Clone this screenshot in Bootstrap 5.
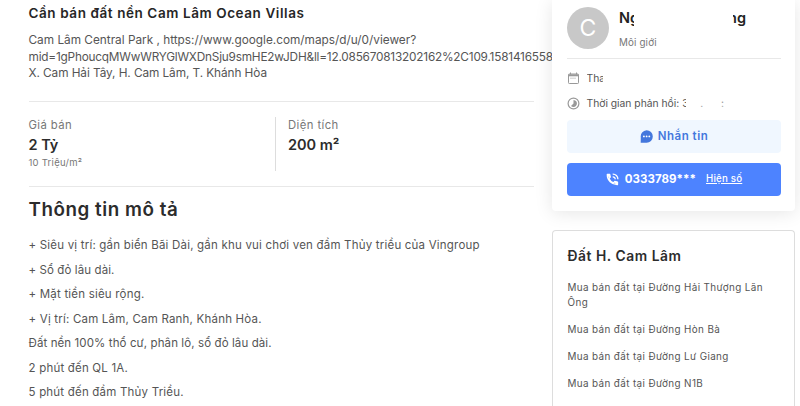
<!DOCTYPE html>
<html lang="vi">
<head>
<meta charset="utf-8">
<meta name="viewport" content="width=device-width, initial-scale=1">
<title>Cần bán đất nền Cam Lâm Ocean Villas</title>
<link href="https://cdn.jsdelivr.net/npm/bootstrap@5.3.0/dist/css/bootstrap.min.css" rel="stylesheet">
<style>
body{font-family:Inter,"Open Sans",sans-serif;color:#555;background:#fff;font-size:11.5px;width:800px;height:406px;overflow:hidden}
.page{height:406px}
.listing{width:505px;margin-left:28.5px;margin-right:18.5px;white-space:nowrap}
.listing-title{font-size:13.5px;line-height:18px;font-weight:600;color:#262626;padding-top:4px;letter-spacing:.58px}
.address{font-size:11.8px;line-height:16.5px;margin-top:10px;height:69px}
.map-id{letter-spacing:-.2px}
.place{letter-spacing:-.07px}
.rule{border-color:#e8e8e8!important}
.facts{height:86px;padding-top:15px}
.fact{width:246px;height:54px}
.fact+.fact{border-left:1px solid #ddd;padding-left:12.5px}
.fact-label{font-size:11.3px;line-height:16px;color:#777;letter-spacing:.42px}
.fact-value{font-size:14.5px;line-height:22px;font-weight:600;color:#2c2c2c;margin-top:1px}
.fact-note{font-size:9.5px;line-height:14px;color:#777;letter-spacing:.25px}
.section-title{font-size:18.8px;line-height:24px;font-weight:600;color:#2c2c2c;margin-top:11px;letter-spacing:.55px}
.description{margin-top:11px}
.description p{font-size:11.5px;line-height:24.5px;letter-spacing:.2px}
.description .tight{letter-spacing:.1px}
.sidebar{width:243px}
.agent{height:211px;padding:7px 14px 0 15px;background:#fff;border-radius:0 0 4px 4px;box-shadow:0 2px 18px rgba(0,0,0,.1)}
.agent-head{height:52px;gap:10px}
.avatar{width:42px;height:42px;background:#c8c8c8;font-size:23px}
.agent-name{font-size:14.5px;line-height:20px;font-weight:600;color:#222;width:127px;margin-top:1px}
.clip{display:inline-block;overflow:hidden;white-space:nowrap}
.clip-ng{width:15px}
.clip-end{width:13px;direction:rtl}
.clip-tha{width:16px}
.clip-num{width:4px}
.role{font-size:9.8px;color:#777;line-height:14px;margin-top:8px;letter-spacing:.15px}
.agent-lines{padding-top:7px}
.agent-line{height:25px;font-size:10.3px;gap:6.5px;color:#555}
.agent-line svg{flex:none}
.trace{color:#999;margin-left:14px}
.trace+.trace{margin-left:18px}
.action{height:33px;border-radius:4px;font-size:11.5px;font-weight:600;border:0;padding:0}
.chat{background:#f0f7ff;color:#4477dd;gap:5px;letter-spacing:.5px}
.call{background:#4d83ff;color:#fff;gap:6px;margin-top:10px}
.phone{font-weight:700;letter-spacing:.05px}
.reveal{font-size:9.7px;font-weight:500;margin-left:4px;letter-spacing:.2px}
.related{margin-top:19px;height:176px;border:1px solid #ddd;border-bottom:0;border-radius:4px 4px 0 0;background:#fff;padding:15px 15px 0 14.5px}
.related h2{font-size:13.8px;line-height:20px;font-weight:600;color:#2c2c2c;margin:0 0 13.5px;letter-spacing:.55px}
.related li{font-size:9.9px;line-height:15px;margin-bottom:12.2px;white-space:nowrap;letter-spacing:.37px}
.related li:last-child{margin-bottom:0}
</style>
<script src="https://cdn.jsdelivr.net/npm/bootstrap@5.3.0/dist/js/bootstrap.bundle.min.js"></script>
</head>
<body>
<div class="page d-flex overflow-hidden">
  <main class="listing flex-shrink-0">
    <h1 class="listing-title mb-0">Cần bán đất nền Cam Lâm Ocean Villas</h1>
    <div class="address">
      <div>Cam Lâm Central Park , https://www.google.com/maps/d/u/0/viewer?</div>
      <div class="map-id">mid=1gPhoucqMWwWRYGlWXDnSju9smHE2wJDH&amp;ll=12.085670813202162%2C109.1581416558</div>
      <div class="place">X. Cam Hải Tây, H. Cam Lâm, T. Khánh Hòa</div>
    </div>
    <section class="facts d-flex border-top border-bottom rule">
      <div class="fact">
        <div class="fact-label">Giá bán</div>
        <div class="fact-value">2 Tỷ</div>
        <div class="fact-note">10 Triệu/m²</div>
      </div>
      <div class="fact">
        <div class="fact-label">Diện tích</div>
        <div class="fact-value">200 m²</div>
      </div>
    </section>
    <h2 class="section-title mb-0">Thông tin mô tả</h2>
    <div class="description">
      <p class="mb-0">+ Siêu vị trí: gần biển Bãi Dài, gần khu vui chơi ven đầm Thủy triều của Vingroup</p>
      <p class="mb-0 tight">+ Sổ đỏ lâu dài.</p>
      <p class="mb-0">+ Mặt tiền siêu rộng.</p>
      <p class="mb-0">+ Vị trí: Cam Lâm, Cam Ranh, Khánh Hòa.</p>
      <p class="mb-0 tight">Đất nền 100% thổ cư, phân lô, sổ đỏ lâu dài.</p>
      <p class="mb-0">2 phút đến QL 1A.</p>
      <p class="mb-0">5 phút đến đầm Thủy Triều.</p>
    </div>
  </main>
  <aside class="sidebar flex-shrink-0 position-relative">
    <section class="agent">
      <div class="agent-head d-flex border-bottom rule">
        <div class="avatar rounded-circle d-flex align-items-center justify-content-center text-white">C</div>
        <div>
          <div class="agent-name d-flex justify-content-between"><span class="clip clip-ng">Ng</span><span class="clip clip-end">ng</span></div>
          <div class="role">Môi giới</div>
        </div>
      </div>
      <div class="agent-lines">
        <div class="agent-line d-flex align-items-center">
          <svg width="13" height="13" viewBox="0 0 13 13" fill="none" stroke="#999"><rect x="1.5" y="2" width="10" height="9.5" rx=".8"/><path d="M1.5 3.3h10" stroke-width="2"/><path d="M3.5.5v2M9.5.5v2"/><path d="M3.5 6.2h6" stroke-dasharray="1 1"/></svg>
          <span class="clip clip-tha">Tha</span>
        </div>
        <div class="agent-line d-flex align-items-center">
          <svg width="13" height="13" viewBox="0 0 13 13" fill="none" stroke="#999"><circle cx="6.5" cy="6.5" r="5.4" stroke-width="1.2"/><path d="M6.5 3a3.5 3.5 0 1 1-2.5 6l2.5-2.5z" fill="#999" stroke="none"/></svg>
          <span class="d-flex">Thời gian phản hồi:&nbsp;<span class="clip clip-num">3</span><span class="trace">.</span><span class="trace">:</span></span>
        </div>
      </div>
      <button class="action chat btn w-100 d-flex align-items-center justify-content-center mt-1" type="button">
        <svg width="13" height="13" viewBox="0 0 13 13"><path d="M6.6.3a6.2 6.2 0 1 1 0 12.4H.7l.1-5.2A6.2 6.2 0 0 1 6.6.3z" fill="#4477dd"/><g fill="#fff"><circle cx="3.9" cy="6.4" r=".9"/><circle cx="6.6" cy="6.4" r=".9"/><circle cx="9.3" cy="6.4" r=".9"/></g></svg>
        <span>Nhắn tin</span>
      </button>
      <button class="action call btn w-100 d-flex align-items-center justify-content-center" type="button">
        <svg width="13" height="13" viewBox="0 0 13 13" fill="none" stroke="#fff" stroke-width="1.3"><path d="M1.3 1.5h2.4l.6 2.6-1.4 1.3c.9 2 2.3 3.4 4.5 4.5l1.4-1.5 2.7.7v2.5C5.8 11.8 1.2 7.3 1.3 1.5z" stroke-linejoin="round"/><path d="M1.3 1.5h2.4l.6 2.6-1.4.8zM8 10.2l.8-1.8 2.7.7v2.5z" fill="#fff" stroke="none"/><path d="M6.7 1.1a5 5 0 0 1 5.2 5.2M6.7 3.8a2.4 2.4 0 0 1 2.5 2.5"/></svg>
        <span class="phone">0333789***</span>
        <span class="reveal text-decoration-underline">Hiện số</span>
      </button>
    </section>
    <section class="related">
      <h2>Đất H. Cam Lâm</h2>
      <ul class="list-unstyled mb-0">
        <li>Mua bán đất tại Đường Hải Thượng Lãn<br>Ông</li>
        <li>Mua bán đất tại Đường Hòn Bà</li>
        <li>Mua bán đất tại Đường Lư Giang</li>
        <li>Mua bán đất tại Đường N1B</li>
      </ul>
    </section>
  </aside>
</div>
</body>
</html>
